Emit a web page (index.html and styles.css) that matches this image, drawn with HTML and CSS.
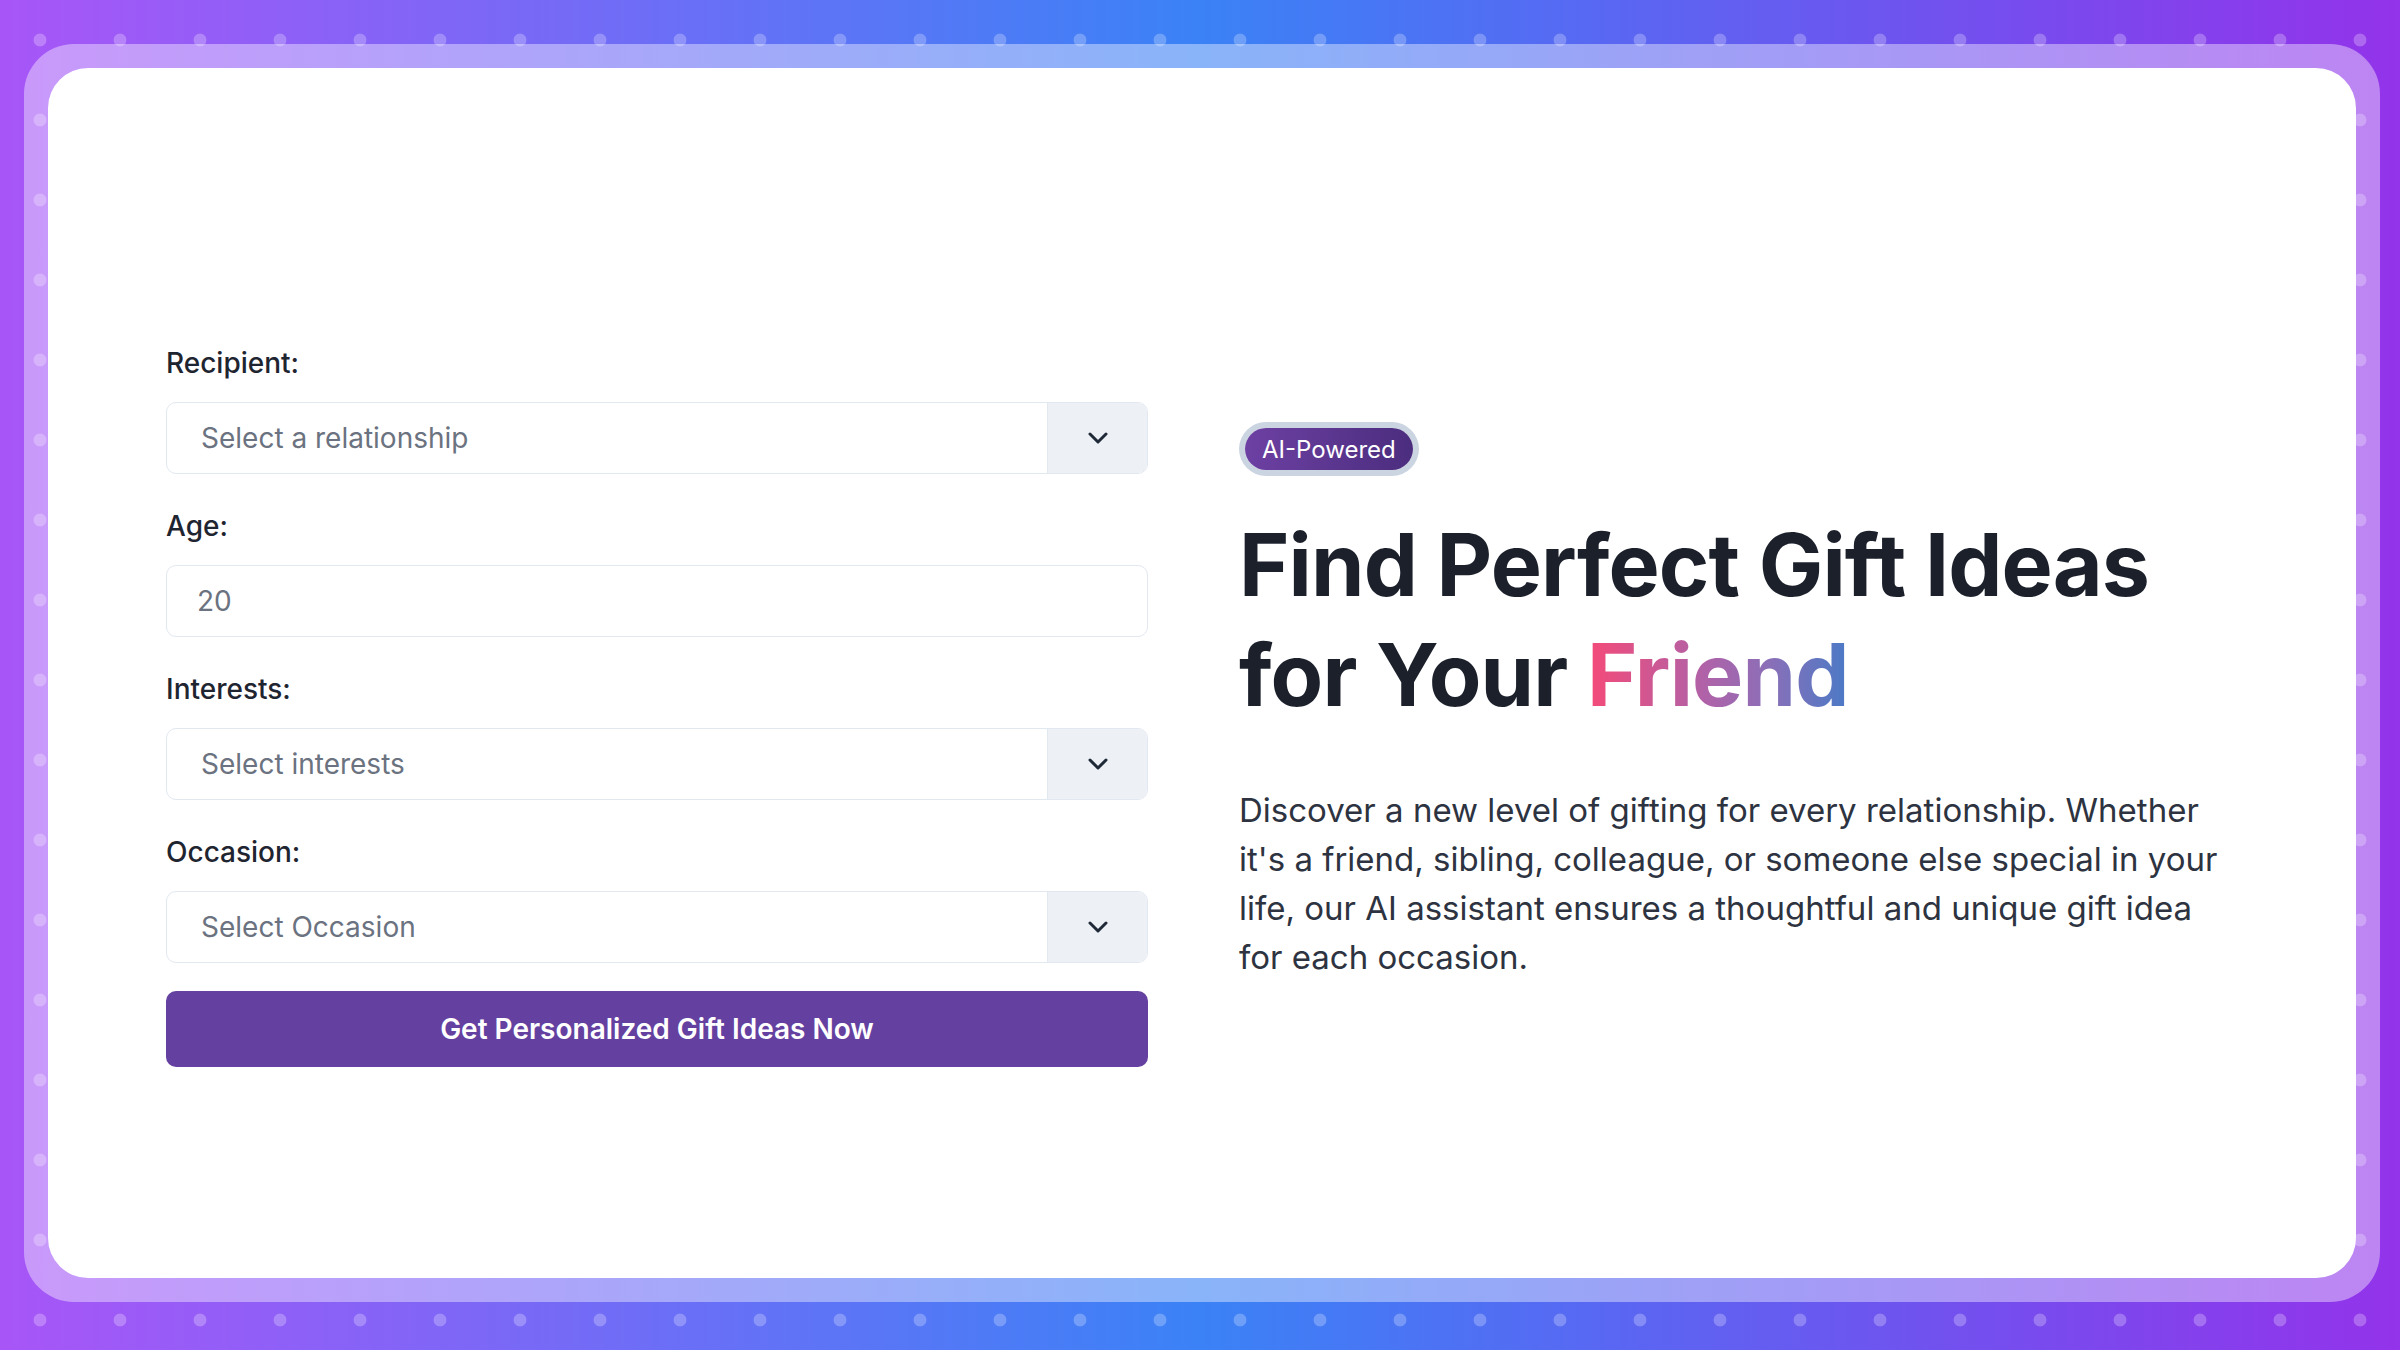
FILE: index.html
```html
<!DOCTYPE html>
<html lang="en">
<head>
<meta charset="utf-8">
<title>AI Gift Finder</title>
<link rel="stylesheet" href="styles.css">
</head>
<body>
<div class="frame">
  <main class="card">
    <form class="form">
      <label class="label">Recipient:</label>
      <div class="select">
        <span class="placeholder">Select a relationship</span>
        <span class="toggle"><svg width="22" height="12" viewBox="0 0 22 12"><path d="M3 2l8 8 8-8" fill="none" stroke="#1f2937" stroke-width="3" stroke-linecap="round" stroke-linejoin="round"/></svg></span>
      </div>
      <label class="label">Age:</label>
      <div class="input"><span class="value">20</span></div>
      <label class="label">Interests:</label>
      <div class="select">
        <span class="placeholder">Select interests</span>
        <span class="toggle"><svg width="22" height="12" viewBox="0 0 22 12"><path d="M3 2l8 8 8-8" fill="none" stroke="#1f2937" stroke-width="3" stroke-linecap="round" stroke-linejoin="round"/></svg></span>
      </div>
      <label class="label">Occasion:</label>
      <div class="select">
        <span class="placeholder">Select Occasion</span>
        <span class="toggle"><svg width="22" height="12" viewBox="0 0 22 12"><path d="M3 2l8 8 8-8" fill="none" stroke="#1f2937" stroke-width="3" stroke-linecap="round" stroke-linejoin="round"/></svg></span>
      </div>
      <button type="button" class="cta">Get Personalized Gift Ideas Now</button>
    </form>
    <section class="hero">
      <span class="badge">AI-Powered</span>
      <h1 class="title">Find Perfect Gift Ideas for Your <span class="grad">Friend</span></h1>
      <p class="desc">Discover a new level of gifting for every relationship. Whether it's a friend, sibling, colleague, or someone else special in your life, our AI assistant ensures a thoughtful and unique gift idea for each occasion.</p>
    </section>
  </main>
</div>
</body>
</html>
```

FILE: styles.css
```css
* { box-sizing: border-box; }
html, body { margin: 0; padding: 0; }
body {
  width: 2400px;
  height: 1350px;
  overflow: hidden;
  font-family: Inter, "Noto Sans", sans-serif;
  background-color: #3b82f6;
  background-image:
    radial-gradient(circle at 40px 40px, rgba(255,255,255,0.25) 0, rgba(255,255,255,0.25) 6px, transparent 6.8px),
    linear-gradient(90deg, #a855f7 0%, #3b82f6 50%, #9333ea 100%);
  background-size: 80px 80px, 100% 100%;
  background-repeat: repeat, no-repeat;
  padding: 44px 20px 48px 24px;
}
.frame {
  height: 100%;
  padding: 24px;
  border-radius: 50px;
  background: rgba(255,255,255,0.4);
}
.card {
  height: 100%;
  background: #fff;
  border-radius: 40px;
  display: grid;
  grid-template-columns: 982px 1fr;
  column-gap: 91px;
  align-items: center;
  padding: 64px 118px 0 118px;
}
.form {
  display: flex;
  flex-direction: column;
  margin: 0;
}
.label {
  font-size: 28px;
  line-height: 39px;
  font-weight: 500;
  color: #1f2530;
  margin-bottom: 19px;
}
.select, .input {
  height: 72px;
  border: 1.5px solid #e2e8f0;
  border-radius: 10px;
  display: flex;
  align-items: center;
  margin-bottom: 33px;
  overflow: hidden;
  background: #fff;
}
.placeholder {
  flex: 1;
  padding-left: 34px;
  font-size: 28px;
  color: #6b7280;
}
.value {
  padding-left: 30px;
  font-size: 28px;
  color: #6b7280;
}
.toggle {
  width: 100px;
  height: 100%;
  background: #edf1f6;
  border-left: 1.5px solid #e2e8f0;
  display: flex;
  align-items: center;
  justify-content: center;
}
.form .select:last-of-type { margin-bottom: 28px; }
.cta {
  height: 76px;
  border: none;
  border-radius: 10px;
  background: #6441a0;
  color: #fff;
  font-family: Inter, "Noto Sans", sans-serif;
  font-size: 28px;
  font-weight: 600;
  cursor: pointer;
}
.hero {
  display: flex;
  flex-direction: column;
  align-items: flex-start;
}
.badge {
  margin-left: 6px;
  height: 42px;
  padding: 0 17px;
  display: inline-flex;
  align-items: center;
  border-radius: 21px;
  background: linear-gradient(90deg, #6d40a3, #4b2d7e);
  box-shadow: 0 0 0 6px #cbd5e1;
  color: #fff;
  font-size: 24px;
  font-weight: 400;
}
.title {
  margin: 40px 0 0 0;
  font-size: 86px;
  line-height: 110px;
  font-weight: 700;
  color: #1b202b;
  letter-spacing: -0.01em;
}
.grad {
  background: linear-gradient(90deg, #f54a78 0%, #b062a8 45%, #8a6fb8 70%, #4b7ac6 100%);
  -webkit-background-clip: text;
  background-clip: text;
  color: transparent;
}
.desc {
  margin: 56px 0 0 0;
  max-width: 995px;
  font-size: 33px;
  line-height: 49px;
  color: #2d3340;
}
```
